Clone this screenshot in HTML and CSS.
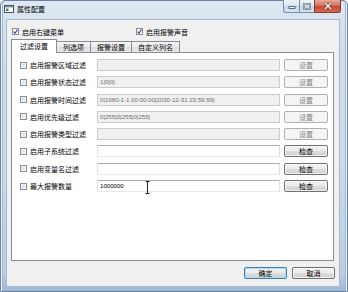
FILE: index.html
```html
<!DOCTYPE html>
<html>
<head>
<meta charset="utf-8">
<link rel="stylesheet" href="styles.css">
</head>
<body>
<div class="window">
  <div class="titlebar">
    <svg class="appicon" width="10" height="8" viewBox="0 0 10 8">
      <rect x="0.5" y="0.5" width="9" height="7" fill="#ffffff" stroke="#4d5358"/>
      <rect x="1" y="1" width="8" height="1.5" fill="#7f9bb8"/>
      <rect x="2" y="3.5" width="2.5" height="2.5" fill="#2e8b6a"/>
    </svg>
    <span class="title">属性配置</span>
    <div class="caption">
      <div class="cbtn cmin"><svg width="8" height="6" viewBox="0 0 8 6"><rect x="1" y="3.5" width="6" height="2" fill="#fff" stroke="#3a4a60" stroke-width="0.8"/></svg></div>
      <div class="cbtn cmax"><svg width="8" height="7" viewBox="0 0 8 7"><rect x="1" y="1" width="6" height="5" fill="none" stroke="#3a4a60" stroke-width="1.8"/><rect x="1" y="1" width="6" height="5" fill="none" stroke="#fff" stroke-width="0.8"/></svg></div>
      <div class="cbtn cclose"><svg width="10" height="8" viewBox="0 0 10 8"><path d="M2 1 L8 7 M8 1 L2 7" stroke="#5a2218" stroke-width="2.6"/><path d="M2 1 L8 7 M8 1 L2 7" stroke="#fff" stroke-width="1.5"/></svg></div>
    </div>
  </div>
  <div class="client">
    <div class="topopts">
      <label class="chk opt1"><span class="box checked"><svg width="5" height="5" viewBox="0 0 5 5"><path d="M0.6 2.6 L2 4.2 L4.5 0.6" fill="none" stroke="#2c4a8c" stroke-width="1.1"/></svg></span>启用右键菜单</label>
      <label class="chk opt2"><span class="box checked"><svg width="5" height="5" viewBox="0 0 5 5"><path d="M0.6 2.6 L2 4.2 L4.5 0.6" fill="none" stroke="#2c4a8c" stroke-width="1.1"/></svg></span>启用报警声音</label>
    </div>
    <div class="tabs">
      <div class="tab active">过滤设置</div>
      <div class="tab">列选项</div>
      <div class="tab">报警设置</div>
      <div class="tab">自定义列名</div>
    </div>
    <div class="pane">
      <div class="rows">
        <div class="row"><label class="chk"><span class="box"></span>启用报警区域过滤</label><div class="field disabled"></div><button class="btn disabled">设置</button></div>
        <div class="row"><label class="chk"><span class="box"></span>启用报警状态过滤</label><div class="field disabled">1|0|0|</div><button class="btn disabled">设置</button></div>
        <div class="row"><label class="chk"><span class="box"></span>启用报警时间过滤</label><div class="field disabled">0|1980-1-1 00:00:00|2030-12-31 23:59:59|</div><button class="btn disabled">设置</button></div>
        <div class="row"><label class="chk"><span class="box"></span>启用优先级过滤</label><div class="field disabled">0|255|0|255|0|255|</div><button class="btn disabled">设置</button></div>
        <div class="row"><label class="chk"><span class="box"></span>启用报警类型过滤</label><div class="field disabled"></div><button class="btn disabled">设置</button></div>
        <div class="row"><label class="chk"><span class="box"></span>启用子系统过滤</label><div class="field"></div><button class="btn">检查</button></div>
        <div class="row"><label class="chk"><span class="box"></span>启用变量名过滤</label><div class="field"></div><button class="btn">检查</button></div>
        <div class="row"><label class="chk"><span class="box"></span>最大报警数量</label><div class="field">1000000<svg class="ibeam" width="5" height="13" viewBox="0 0 5 13"><path d="M0.5 0.5 H4.5 M2.5 0.5 V12.5 M0.5 12.5 H4.5" stroke="#222" stroke-width="1" fill="none"/></svg></div><button class="btn">检查</button></div>
      </div>
    </div>
    <div class="footer">
      <button class="btn big default">确定</button>
      <button class="btn big">取消</button>
    </div>
  </div>
</div>
</body>
</html>
```

FILE: styles.css
```css
html, body {
  margin: 0;
  padding: 0;
}
body {
  width: 348px;
  height: 292px;
  overflow: hidden;
  background: #ffffff;
  font-family: "Noto Sans CJK SC", "Liberation Sans", sans-serif;
  font-size: 7px;
  color: #000;
}
.window {
  width: 348px;
  height: 292px;
  box-sizing: border-box;
  display: flex;
  flex-direction: column;
  border: 1px solid #6d82a0;
  border-radius: 5px 5px 0 0;
  padding: 0 7px 4px 5px;
  background: linear-gradient(180deg, #dfe8f2 0%, #d3dfec 10%, #cbd9e8 60%, #b9cde3 94%, #9db7d6 100%);
  box-shadow: inset 1px 0 0 #eef3f9, inset -1px 0 0 #eef3f9, inset 2px 0 0 #9fb8d6, inset -2px 0 0 #9fb8d6;
}
.titlebar {
  height: 18px;
  margin: 0 -7px 0 -5px;
  padding: 0 6px 0 3px;
  display: flex;
  align-items: flex-start;
  flex-shrink: 0;
}
.appicon {
  margin-top: 4px;
  flex-shrink: 0;
}
.title {
  margin-left: 3px;
  line-height: 17px;
  color: #000;
}
.caption {
  margin-left: auto;
  margin-top: -1px;
  display: flex;
  height: 13px;
}
.cbtn {
  box-sizing: border-box;
  height: 13px;
  display: flex;
  align-items: center;
  justify-content: center;
  border: 1px solid #7b8ea8;
  border-top: none;
}
.cmin {
  width: 16px;
  border-radius: 0 0 0 3px;
  border-right: none;
  background: linear-gradient(180deg, #eef3f9 0%, #dce6f1 48%, #c6d5e6 52%, #d6e2ef 100%);
}
.cmax {
  width: 15px;
  border-right: none;
  background: linear-gradient(180deg, #eef3f9 0%, #dce6f1 48%, #c6d5e6 52%, #d6e2ef 100%);
}
.cmax svg { margin-top: 1px; }
.cclose {
  width: 27px;
  border-color: #843b2f;
  border-radius: 0 0 3px 0;
  background: linear-gradient(180deg, #e8a898 0%, #d57564 45%, #c34a35 55%, #d46a50 100%);
}
.client {
  flex: 1;
  box-sizing: border-box;
  background: #f0f0f0;
  border: 1px solid #a9b9cc;
  padding: 7px 5px 0 4px;
  display: flex;
  flex-direction: column;
}
.topopts {
  display: flex;
  height: 9px;
  align-items: center;
}
.chk {
  display: flex;
  align-items: center;
  white-space: nowrap;
}
.opt1 {
  margin-left: 1px;
  width: 124px;
}
.box {
  box-sizing: border-box;
  width: 7px;
  height: 7px;
  border: 1px solid #8a8d92;
  background: linear-gradient(135deg, #c9ced6 0%, #e4e7eb 55%, #f8f8f8 100%);
  box-shadow: inset 0 0 0 1px #f4f4f4;
  margin-right: 3px;
  display: flex;
  align-items: center;
  justify-content: center;
  flex-shrink: 0;
}
.box.checked {
  background: #f6f7f9;
  box-shadow: none;
}
.tabs {
  display: flex;
  align-items: flex-end;
  height: 13px;
  margin-top: 3px;
  position: relative;
  z-index: 1;
}
.tab {
  box-sizing: border-box;
  height: 11px;
  line-height: 10px;
  padding: 0 6px;
  border: 1px solid #898c95;
  border-bottom: none;
  border-left: none;
  background: linear-gradient(180deg, #f4f4f4 0%, #ebebeb 50%, #dedede 50%, #e8e8e8 100%);
  white-space: nowrap;
}
.tab.active {
  height: 14px;
  line-height: 12px;
  margin-bottom: -1px;
  padding: 0 8px;
  border-left: 1px solid #898c95;
  background: #ffffff;
}
.pane {
  box-sizing: border-box;
  height: 209px;
  background: #ffffff;
  border: 1px solid #898c95;
  padding: 6px 5px 0 8px;
}
.rows {
  display: grid;
  grid-auto-rows: 12px;
  row-gap: 5.3px;
}
.row {
  display: flex;
  align-items: center;
  height: 12px;
}
.row .chk {
  width: 77px;
}
.field {
  position: relative;
  box-sizing: border-box;
  width: 183px;
  height: 12px;
  border: 1px solid #abadb3;
  border-color: #abadb3 #dbdfe6 #e3e9ef #e2e3ea;
  background: #ffffff;
  padding-left: 2px;
  font-family: "Liberation Sans", sans-serif;
  font-size: 6.1px;
  line-height: 10px;
  color: #000;
  white-space: nowrap;
}
.field.disabled {
  background: #f0f0f0;
  border-color: #c8ccd0;
  color: #6d6d6d;
}
.ibeam {
  position: absolute;
  left: 47px;
  top: 0px;
}
.btn {
  box-sizing: border-box;
  margin-left: 4px;
  width: 44px;
  height: 12px;
  padding: 0;
  font-family: "Noto Sans CJK SC", sans-serif;
  font-size: 7px;
  line-height: 10px;
  color: #000;
  border: 1px solid #707070;
  border-radius: 2px;
  background: linear-gradient(180deg, #f2f2f2 0%, #ebebeb 48%, #dddddd 52%, #cfcfcf 100%);
  box-shadow: inset 0 0 0 1px rgba(255,255,255,0.7);
}
.btn.disabled {
  border-color: #adb2b5;
  background: #f4f4f4;
  color: #838383;
  box-shadow: none;
}
.footer {
  display: flex;
  justify-content: flex-end;
  gap: 5px;
  margin-top: 6px;
  margin-right: -1px;
}
.btn.big {
  margin-left: 0;
  width: 43px;
}
.btn.default {
  border-color: #3c7fb1;
  box-shadow: inset 0 0 0 1px #b6dcf3;
}
```
